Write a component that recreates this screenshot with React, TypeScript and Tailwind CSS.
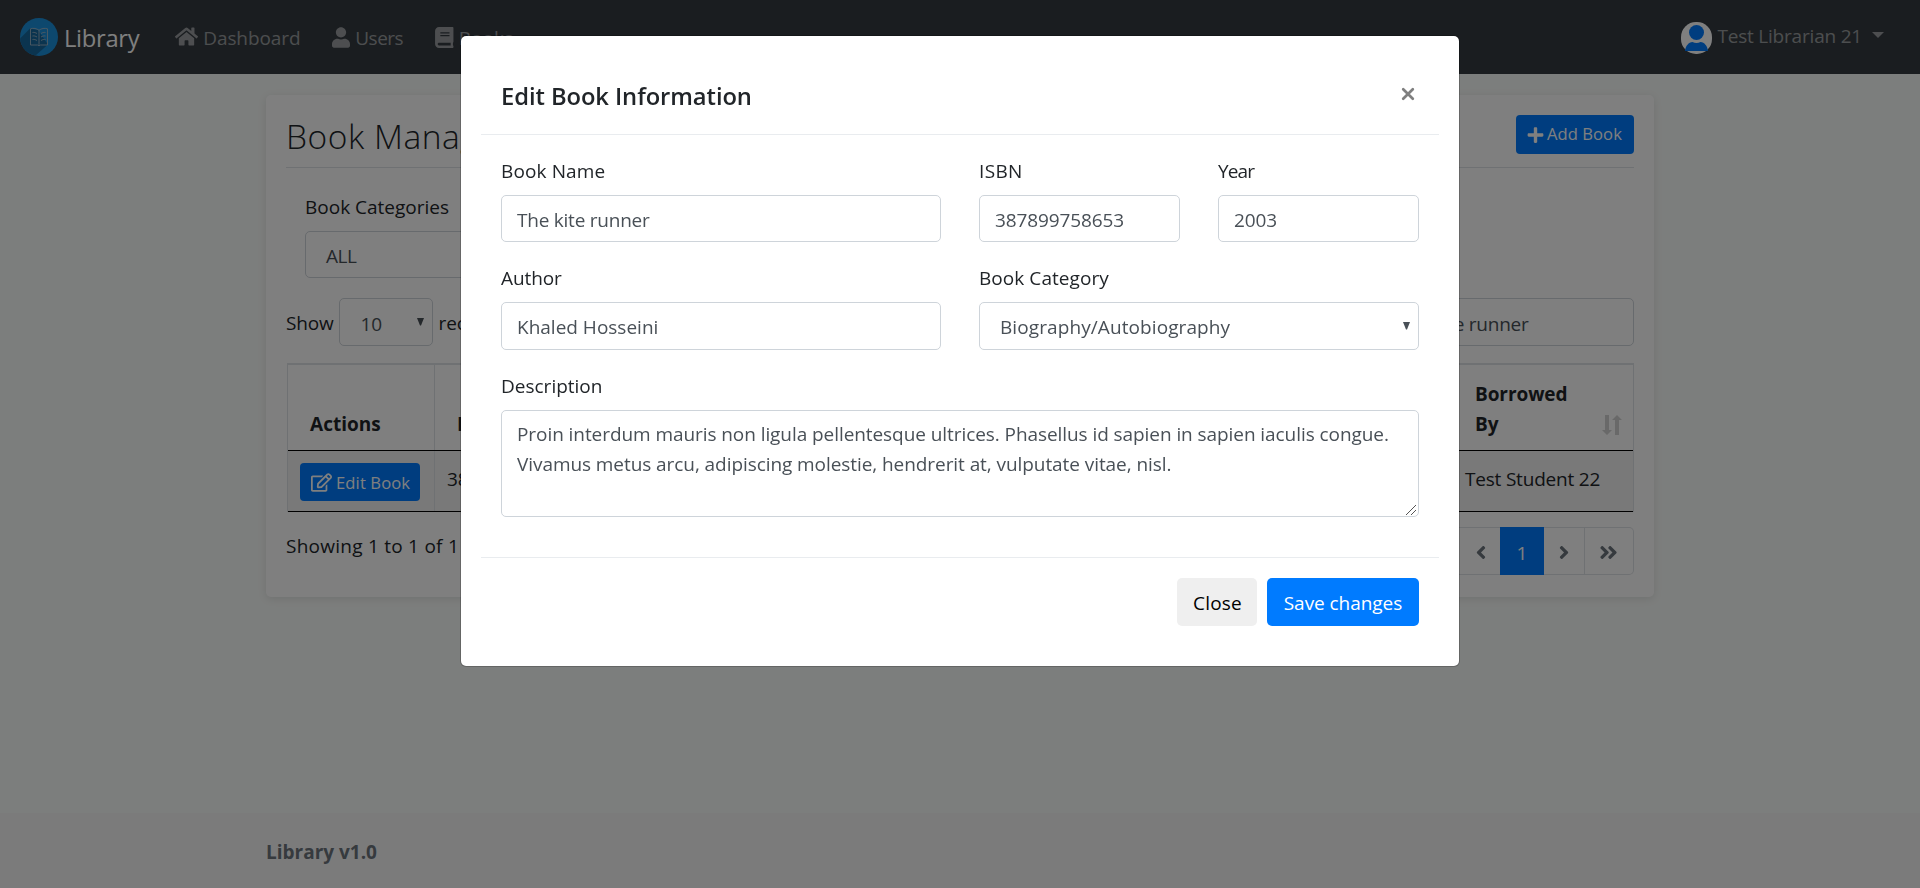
import React from "react";
import {
  FaHome,
  FaUser,
  FaBook,
  FaPlus,
  FaRegEdit,
  FaAngleLeft,
  FaAngleRight,
  FaAngleDoubleLeft,
  FaAngleDoubleRight,
} from "react-icons/fa";

function Caret({ className = "" }: { className?: string }) {
  return (
    <svg viewBox="0 0 7 8" className={`h-[8px] w-[7px] shrink-0 fill-[#495057] ${className}`}>
      <path d="M0 0h7L4 7.4H3z" />
    </svg>
  );
}

function Logo() {
  return (
    <svg viewBox="0 0 38 38" className="h-[38px] w-[38px]">
      <defs>
        <clipPath id="disc">
          <circle cx="19" cy="19" r="19" />
        </clipPath>
      </defs>
      <g clipPath="url(#disc)">
        <rect width="38" height="38" fill="#1b91dd" />
        <path d="M10 10.500 0 20.500V38H15L28 26.500 18 12z" fill="#17699f" />
      </g>
      <g fill="none" stroke="#9fb6c6" strokeWidth="0.9">
        <path d="M10.500 12v-1.200c3-.9 6-.4 8.500 1.400 2.500-1.800 5.500-2.300 8.500-1.400V27h-7l-1.500.8-1.500-.8h-7z" />
        <path d="M19 12.200V27M12.500 14.500c1.700-.3 3 .1 4.500 1M12.500 18c1.700-.3 3 .1 4.500 1M12.500 21.500c1.700-.3 3 .1 4.500 1M25.500 14.500c-1.700-.3-3 .1-4.500 1M25.500 18c-1.700-.3-3 .1-4.500 1M25.500 21.500c-1.700-.3-3 .1-4.500 1" />
      </g>
    </svg>
  );
}

function Avatar() {
  return (
    <svg viewBox="0 0 31 32" className="h-[32px] w-[31px]">
      <rect width="31" height="32" rx="15" fill="#fff" />
      <circle cx="15.500" cy="10.500" r="7.500" fill="#007bff" />
      <path d="M4 29c.8-5.500 3.500-8.500 7.500-9 2.600 1.200 5.400 1.200 8 0 4 .5 6.700 3.500 7.500 9z" fill="#007bff" />
    </svg>
  );
}

function SortIcon() {
  return (
    <svg viewBox="0 0 20 20" className="h-[20px] w-[20px] fill-[#d3d3d3]">
      <path d="M3 0h4v15h3l-5 5-5-5h3z" />
      <path d="M13 20h4V5h3l-5-5-5 5h3z" />
    </svg>
  );
}

function Navbar() {
  return (
    <nav className="flex h-[74px] items-start bg-[#343a40] text-white/50">
      <div className="flex pt-[18px] pl-[20px]">
        <Logo />
        <span className="ml-[6px] h-[38px] text-[23.75px] leading-[41px] tracking-[-0.31px] text-white">
          Library
        </span>
      </div>
      <div className="flex pl-[36px]">
        <div className="flex w-[157px] pt-[22px]">
          <FaHome className="mt-[4px] h-[21px] w-[23px]" />
          <span className="ml-[5px] leading-[32px] tracking-[-0.1px]">Dashboard</span>
        </div>
        <div className="flex w-[103px] pt-[22px]">
          <FaUser className="mt-[5px] h-[21px] w-[18px]" />
          <span className="ml-[5px] leading-[32px] tracking-[-0.5px]">Users</span>
        </div>
        <div className="flex pt-[22px]">
          <FaBook className="mt-[5px] h-[21px] w-[18.500px]" />
          <span className="ml-[5px] leading-[32px]">Books</span>
        </div>
      </div>
      <div className="ml-auto flex pt-[22px] pr-[36px]">
        <Avatar />
        <span className="ml-[5px] leading-[29px] tracking-[-0.2px]">Test Librarian 21</span>
        <svg viewBox="0 0 12 6" className="mt-[10px] ml-[10px] h-[6px] w-[12px] fill-current">
          <path d="M0 0h12L6 6z" />
        </svg>
      </div>
    </nav>
  );
}

function BookTable() {
  return (
    <div className="mt-[17px] ml-px border-t-2 border-r border-l border-[#dee2e6] text-[#212529]">
      <div className="grid h-[86px] grid-cols-[147px_190px_1fr_160px_182px] items-stretch border-b border-black font-bold">
        <div className="flex items-end border-r border-[#dee2e6] pb-[11px] pl-[22px] leading-[30px] tracking-[0.02px]">
          Actions
        </div>
        <div className="flex items-end border-r border-[#dee2e6] pb-[11px] pl-[22px]">ISBN</div>
        <div className="flex items-end border-r border-[#dee2e6] pb-[11px] pl-[22px]">Book Name</div>
        <div className="flex items-end border-r border-[#dee2e6] pb-[11px] pl-[22px]">Year</div>
        <div className="flex items-end justify-between pr-[11px] pl-[24px]">
          <div className="w-[100px] pb-[11px] leading-[30px] tracking-[-0.08px] whitespace-normal">Borrowed By</div>
          <div className="pb-[15px]">
            <SortIcon />
          </div>
        </div>
      </div>
      <div className="grid h-[61px] grid-cols-[147px_190px_1fr_160px_182px] items-stretch border-b border-black bg-[#f2f2f2]">
        <div className="border-r border-[#dee2e6] pt-[12px] pl-[12px]">
          <button className="flex h-[38px] w-[120px] items-center rounded-[4px] bg-[#007bff] pl-[11px] text-[16.600px] text-white">
            <FaRegEdit className="h-[19px] w-[21px]" />
            <span className="ml-[4px] pt-px tracking-[0.11px]">Edit Book</span>
          </button>
        </div>
        <div className="border-r border-[#dee2e6] pt-[12px] pl-[12px] leading-[32px] tracking-[-0.11px]">387899758653</div>
        <div className="border-r border-[#dee2e6] pt-[12px] pl-[12px] leading-[32px]">The kite runner</div>
        <div className="border-r border-[#dee2e6] pt-[12px] pl-[12px] leading-[32px]">2003</div>
        <div className="pt-[12px] pl-[14px] leading-[32px] tracking-[-0.2px]">Test Student 22</div>
      </div>
    </div>
  );
}

function Pagination() {
  return (
    <div className="flex h-[48px] text-[#6c757d]">
      <div className="flex w-[49px] items-center justify-center rounded-l-[5px] border border-[#dee2e6]">
        <FaAngleDoubleLeft className="h-[20px] w-[18px]" />
      </div>
      <div className="flex w-[42px] items-center justify-center border-y border-[#dee2e6] pt-[2px] pl-[3px]">
        <FaAngleLeft className="h-[21px] w-[14px]" />
      </div>
      <div className="flex w-[44px] items-center justify-center bg-[#007bff] pt-[3px] text-white">1</div>
      <div className="flex w-[41px] items-center justify-center border-y border-r border-[#dee2e6] pt-[2px] pr-[1px]">
        <FaAngleRight className="h-[21px] w-[14px]" />
      </div>
      <div className="flex w-[49px] items-center justify-center rounded-r-[5px] border-y border-r border-[#dee2e6] pt-[2px] pr-[1px]">
        <FaAngleDoubleRight className="h-[21px] w-[19px]" />
      </div>
    </div>
  );
}

function BookManagement() {
  return (
    <section className="mx-auto mt-[21px] h-[502px] w-[1388px] rounded-[5px] bg-white px-[20px] pt-[20px] shadow-[0_2px_8px_rgba(0,0,0,0.1)]">
      <div className="flex h-[53px] items-start justify-between border-b border-[#dee2e6]">
        <h3 className="text-[33.500px] leading-[42px] font-light tracking-[0.55px]">Book Management</h3>
        <button className="flex h-[39px] w-[118px] items-center rounded-[4px] bg-[#007bff] pl-[11px] text-[16.600px] text-white">
          <FaPlus className="h-[18px] w-[17px]" />
          <span className="ml-[3px] pb-[2px] tracking-[0.05px]">Add Book</span>
        </button>
      </div>
      <div className="mt-[23px] w-[440px] pl-[19px]">
        <div className="h-[30px] leading-[32px]">Book Categories</div>
        <div className="mt-[10px] flex h-[47px] items-center rounded-[5px] border border-[#ced4da] pt-[3px] pl-[20px] tracking-[-0.47px] text-[#495057]">
          ALL
        </div>
      </div>
      <div className="mt-[20px] flex h-[48px] items-center">
        <span className="pt-px tracking-[-0.2px]">Show</span>
        <div className="ml-[6px] flex h-[48px] w-[94px] items-center justify-between rounded-[5px] border border-[#ced4da] pr-[8px] pl-[20px] text-[#495057]">
          <span className="pt-[3px] tracking-[-0.1px]">10</span>
          <Caret />
        </div>
        <span className="ml-[5px] pt-px">records</span>
        <div className="ml-auto flex h-[48px] w-[254px] items-center rounded-[5px] border border-[#ced4da] pt-[3px] pl-[15px] tracking-[-0.23px] text-[#495057]">
          The kite runner
        </div>
      </div>
      <BookTable />
      <div className="mt-[15px] flex items-start justify-between">
        <span className="pt-[4px] leading-[30px] tracking-[0.25px]">Showing 1 to 1 of 1 records</span>
        <Pagination />
      </div>
    </section>
  );
}

function Field({ label, value, track }: { label: string; value: string; track: [string, string] }) {
  return (
    <label className="block">
      <span className={`block h-[30px] leading-[32px] ${track[0]}`}>{label}</span>
      <span
        className={`mt-[10px] flex h-[47px] items-center rounded-[5px] border border-[#ced4da] pt-[3px] pl-[15px] text-[#495057] ${track[1]}`}
      >
        {value}
      </span>
    </label>
  );
}

function EditBookModal() {
  return (
    <div className="fixed inset-0 bg-black/50">
      <div
        role="dialog"
        className="mx-auto mt-[35px] h-[632px] w-[1000px] rounded-[6px] border border-black/20 bg-white bg-clip-padding p-[20px]"
      >
        <div className="flex h-[79px] justify-between border-b border-[#e9ecef] px-[20px] pt-[20px]">
          <h5 className="text-[23.750px] leading-[40px] font-semibold tracking-[-0.07px]">Edit Book Information</h5>
          <svg viewBox="0 0 14 14" className="mt-[11px] mr-[4px] h-[14px] w-[14px]">
            <path d="M2.200 2.200 11.800 11.800M11.800 2.200 2.200 11.800" stroke="#7f7f7f" strokeWidth="2.700" strokeLinecap="round" />
          </svg>
        </div>
        <div className="flex h-[423px] flex-col gap-[20px] border-b border-[#e9ecef] px-[20px] pt-[20px]">
          <div className="grid grid-cols-[440px_201px_201px] gap-x-[38px]">
            <Field label="Book Name" value="The kite runner" track={["tracking-[0.12px]", "tracking-[-0.23px]"]} />
            <Field label="ISBN" value="387899758653" track={["tracking-[0.33px]", "tracking-[-0.11px]"]} />
            <Field label="Year" value="2003" track={["tracking-[-0.9px]", "tracking-[-0.11px]"]} />
          </div>
          <div className="grid h-[88px] grid-cols-[440px_440px] gap-x-[38px]">
            <label className="flex flex-col">
              <span className="h-[30px] leading-[32px] tracking-[-0.1px]">Author</span>
              <span className="mt-[10px] flex h-[48px] items-center rounded-[5px] border border-[#ced4da] pt-[2px] pl-[15px] text-[#495057]">
                Khaled Hosseini
              </span>
            </label>
            <div>
              <div className="h-[30px] leading-[32px] tracking-[0.06px]">Book Category</div>
              <div className="mt-[10px] flex h-[48px] items-center justify-between rounded-[5px] border border-[#ced4da] pr-[8px] pl-[20px] text-[#495057]">
                <span className="pt-[2px] tracking-[0.09px]">Biography/Autobiography</span>
                <Caret />
              </div>
            </div>
          </div>
          <div className="relative">
            <div className="h-[30px] leading-[32px]">Description</div>
            <textarea
              readOnly
              className="mt-[10px] block h-[107px] w-full resize-none rounded-[5px] border border-[#ced4da] px-[15px] py-[7.500px] leading-[30px] tracking-[-0.07px] text-[#495057] outline-none"
              defaultValue="Proin interdum mauris non ligula pellentesque ultrices. Phasellus id sapien in sapien iaculis congue. Vivamus metus arcu, adipiscing molestie, hendrerit at, vulputate vitae, nisl."
            />
            <svg viewBox="0 0 10 10" className="absolute right-[3px] bottom-[2px] h-[10px] w-[10px]">
              <path d="M0 10 10 0M5 10 10 5" stroke="#555" strokeWidth="1" />
            </svg>
          </div>
        </div>
        <div className="flex justify-end gap-[10px] px-[20px] pt-[20px]">
          <button className="h-[48px] w-[80px] rounded-[5px] bg-[#efefef] pt-[2px] pl-px tracking-[0.2px] text-black">Close</button>
          <button className="h-[48px] w-[152px] rounded-[5px] bg-[#007bff] pt-[2px] tracking-[-0.05px] text-white">
            Save changes
          </button>
        </div>
      </div>
    </div>
  );
}

export default function App() {
  return (
    <div className="flex h-[888px] flex-col overflow-hidden bg-[#f9fcfa] font-['Open_Sans',sans-serif] text-[19px] leading-[30px] whitespace-nowrap text-[#212529] [&_textarea]:whitespace-pre-wrap">
      <Navbar />
      <BookManagement />
      <footer className="mt-auto h-[75px] bg-[#f7f7f7]">
        <div className="mx-auto w-[1388px] pt-[23px] leading-[32px] font-bold tracking-normal text-[#6c757d]">
          Library v1.0
        </div>
      </footer>
      <EditBookModal />
    </div>
  );
}
